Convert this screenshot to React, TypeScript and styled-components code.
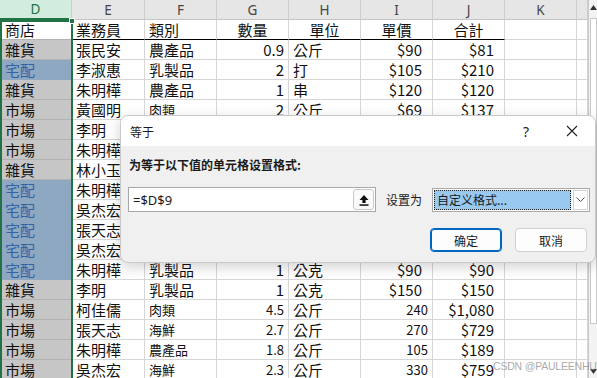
import React from "react";
import styled, { createGlobalStyle, css } from "styled-components";

const GlobalStyle = createGlobalStyle`
  html, body {
    margin: 0;
    padding: 0;
    background: #ffffff;
  }
`;

const COLS = [72, 73, 72, 72, 72, 72, 72, 72, 11];
const GRID = COLS.map((c) => `${c}px`).join(" ");
const LETTERS = ["D", "E", "F", "G", "H", "I", "J", "K", ""];

type Tone = "active" | "grey" | "blue";
type Row = {
  shop: string;
  tone: Tone;
  rep: string;
  cat: string;
  qty: string;
  unit: string;
  price: string;
  total: string;
  smallCat?: boolean;
  smallNum?: boolean;
};

const rows: Row[] = [
  { shop: "雜貨", tone: "grey", rep: "張民安", cat: "農產品", qty: "0.9", unit: "公斤", price: "$90", total: "$81" },
  { shop: "宅配", tone: "blue", rep: "李淑惠", cat: "乳製品", qty: "2", unit: "打", price: "$105", total: "$210" },
  { shop: "雜貨", tone: "grey", rep: "朱明樺", cat: "農產品", qty: "1", unit: "串", price: "$120", total: "$120" },
  { shop: "市場", tone: "grey", rep: "黃國明", cat: "肉類", qty: "2", unit: "公斤", price: "$69", total: "$137", smallCat: true },
  { shop: "市場", tone: "grey", rep: "李明", cat: "海鮮", qty: "1.5", unit: "公斤", price: "$300", total: "$450" },
  { shop: "市場", tone: "grey", rep: "朱明樺", cat: "肉類", qty: "3", unit: "公斤", price: "$69", total: "$206" },
  { shop: "雜貨", tone: "grey", rep: "林小玉", cat: "農產品", qty: "2", unit: "串", price: "$120", total: "$240" },
  { shop: "宅配", tone: "blue", rep: "朱明樺", cat: "乳製品", qty: "1", unit: "打", price: "$105", total: "$105" },
  { shop: "宅配", tone: "blue", rep: "吳杰宏", cat: "乳製品", qty: "2", unit: "公克", price: "$90", total: "$180" },
  { shop: "宅配", tone: "blue", rep: "張天志", cat: "農產品", qty: "1", unit: "串", price: "$120", total: "$120" },
  { shop: "宅配", tone: "blue", rep: "吳杰宏", cat: "乳製品", qty: "3", unit: "打", price: "$105", total: "$315" },
  { shop: "宅配", tone: "blue", rep: "朱明樺", cat: "乳製品", qty: "1", unit: "公克", price: "$90", total: "$90" },
  { shop: "雜貨", tone: "grey", rep: "李明", cat: "乳製品", qty: "1", unit: "公克", price: "$150", total: "$150" },
  { shop: "市場", tone: "grey", rep: "柯佳儒", cat: "肉類", qty: "4.5", unit: "公斤", price: "240", total: "$1,080", smallCat: true, smallNum: true },
  { shop: "市場", tone: "grey", rep: "張天志", cat: "海鮮", qty: "2.7", unit: "公斤", price: "270", total: "$729", smallCat: true, smallNum: true },
  { shop: "市場", tone: "grey", rep: "朱明樺", cat: "農產品", qty: "1.8", unit: "公斤", price: "105", total: "$189", smallCat: true, smallNum: true },
  { shop: "市場", tone: "grey", rep: "吳杰宏", cat: "海鮮", qty: "2.3", unit: "公斤", price: "330", total: "$759", smallCat: true, smallNum: true },
];

const Page = styled.div`
  position: relative;
  width: 597px;
  height: 378px;
  overflow: hidden;
  display: flex;
  background: #ffffff;
  font-family: "Noto Sans CJK TC", "Noto Sans", sans-serif;
`;

const Sheet = styled.div`
  width: 588px;
  display: flex;
  flex-direction: column;
`;

const ColHeaderRow = styled.div`
  display: grid;
  grid-template-columns: ${GRID};
  height: 20px;
  background: #e6e6e6;
`;

const ColLetter = styled.div<{ $active?: boolean }>`
  display: flex;
  align-items: center;
  justify-content: center;
  box-sizing: border-box;
  border-right: 1px solid #cdcdcd;
  border-bottom: 1px solid #c4c4c4;
  font-family: "Noto Sans", "Liberation Sans", sans-serif;
  font-size: 13.5px;
  color: #444444;
  ${(p) =>
    p.$active &&
    css`
      background: #d2ecdd;
      color: #217346;
      border-bottom: 2px solid #217346;
    `}
`;

const DataRow = styled.div`
  display: grid;
  grid-template-columns: ${GRID};
  height: 20px;
`;

const Cell = styled.div<{
  $align?: "left" | "right" | "center";
  $small?: boolean;
  $money?: boolean;
  $head?: boolean;
}>`
  box-sizing: border-box;
  height: 20px;
  border-right: 1px solid #d6d6d6;
  border-bottom: 1px solid #d6d6d6;
  padding: 0 ${(p) => (p.$money ? "10px" : "4px")} 0 4px;
  font-size: ${(p) => (p.$small ? "13px" : "15px")};
  line-height: 19px;
  color: #111111;
  white-space: nowrap;
  overflow: hidden;
  text-align: ${(p) => p.$align ?? "left"};
  ${(p) =>
    p.$head &&
    css`
      border-bottom: 1px solid #000000;
    `}
`;

const ShopCell = styled(Cell)<{ $tone: Tone }>`
  padding-left: 5px;
  border-right: none;
  ${(p) =>
    p.$tone === "grey" &&
    css`
      background: #c6c6c6;
      border-bottom-color: #b3b3b3;
    `}
  ${(p) =>
    p.$tone === "blue" &&
    css`
      background: #8ea8c1;
      color: #2f63a6;
      border-bottom-color: #8ea8c1;
    `}
  ${(p) =>
    p.$tone === "active" &&
    css`
      background: #ffffff;
      border-bottom-color: #b3b3b3;
    `}
`;

const SelectionFrame = styled.div`
  position: absolute;
  left: 0;
  top: 20px;
  width: 73px;
  height: 360px;
  box-sizing: border-box;
  border: 2px solid #217346;
  border-bottom: none;
  pointer-events: none;
`;

const Handle = styled.div`
  position: absolute;
  left: 69px;
  top: 18px;
  width: 4px;
  height: 4px;
  background: #217346;
  border: 1px solid #ffffff;
`;

const ScrollTrack = styled.div`
  width: 9px;
  box-sizing: border-box;
  border-left: 1px solid #c9c9c9;
  background: #f3f3f3;
  display: flex;
  flex-direction: column;
  align-items: center;
`;

const ScrollArrow = styled.div`
  height: 14px;
  display: flex;
  align-items: center;
  justify-content: center;
`;

const ScrollThumb = styled.div`
  width: 7px;
  flex: 1;
  margin: 4px 0 40px;
  box-sizing: border-box;
  border: 1px solid #c9c9c9;
  background: #ffffff;
`;

const Dialog = styled.div`
  position: absolute;
  left: 120px;
  top: 115px;
  width: 476px;
  height: 148px;
  box-sizing: border-box;
  border: 1px solid #c9c9c9;
  border-radius: 8px;
  overflow: hidden;
  background: #f0f0f0;
  box-shadow: 0 4px 14px rgba(0, 0, 0, 0.18);
  display: flex;
  flex-direction: column;
  font-family: "Noto Sans CJK SC", "Noto Sans", sans-serif;
  color: #1a1a1a;
`;

const TitleBar = styled.div`
  height: 30px;
  flex: none;
  background: #ffffff;
  display: flex;
  align-items: center;
  padding: 0 0 0 9px;
  font-size: 12px;
`;

const TitleText = styled.div`
  flex: 1;
`;

const TitleButton = styled.div`
  width: 46px;
  height: 30px;
  display: flex;
  align-items: center;
  justify-content: center;
  font-size: 14px;
  font-family: "Noto Sans", sans-serif;
`;

const Body = styled.div`
  flex: 1;
  display: flex;
  flex-direction: column;
  padding: 11px 7px 0 7px;
`;

const Prompt = styled.div`
  font-size: 12px;
  font-weight: 700;
  line-height: 16px;
  padding-left: 1px;
`;

const FieldRow = styled.div`
  display: flex;
  align-items: center;
  margin-top: 14px;
  height: 25px;
`;

const Input = styled.div`
  flex: none;
  width: 248px;
  height: 25px;
  box-sizing: border-box;
  border: 1px solid #a8a8a8;
  background: #ffffff;
  display: flex;
  align-items: center;
  padding: 0 1px 0 4px;
  font-family: "Noto Sans", "Liberation Sans", sans-serif;
  font-size: 13px;
`;

const InputText = styled.div`
  flex: 1;
`;

const RefButton = styled.div`
  width: 21px;
  height: 21px;
  box-sizing: border-box;
  border: 1px solid #c8c8c8;
  border-radius: 3px;
  background: #fafafa;
  display: flex;
  align-items: center;
  justify-content: center;
`;

const FieldLabel = styled.div`
  flex: none;
  white-space: nowrap;
  font-size: 12px;
  margin: 0 10px 0 10px;
`;

const Select = styled.div`
  flex: none;
  width: 158px;
  height: 24px;
  box-sizing: border-box;
  border: 1px solid #a8a8a8;
  background: #ffffff;
  display: flex;
  align-items: stretch;
  padding: 1px;
`;

const SelectValue = styled.div`
  flex: 1;
  background: #99c9ef;
  outline: 1px dotted #222222;
  outline-offset: -1px;
  font-size: 12px;
  line-height: 20px;
  padding-left: 3px;
  white-space: nowrap;
`;

const SelectArrow = styled.div`
  width: 15px;
  margin-left: 2px;
  box-sizing: border-box;
  border: 1px solid #d4d4d4;
  display: flex;
  align-items: center;
  justify-content: center;
`;

const ButtonRow = styled.div`
  display: flex;
  justify-content: flex-end;
  gap: 13px;
  margin-top: 16px;
  padding-right: 1px;
`;

const Button = styled.div<{ $primary?: boolean }>`
  width: 72px;
  height: 24px;
  box-sizing: border-box;
  border-radius: 4px;
  background: #fdfdfd;
  border: 1px solid ${(p) => (p.$primary ? "#0067c0" : "#d0d0d0")};
  ${(p) =>
    p.$primary &&
    css`
      box-shadow: inset 0 0 0 1px #0067c0;
    `}
  display: flex;
  align-items: center;
  justify-content: center;
  font-size: 12px;
`;

const Watermark = styled.div`
  position: absolute;
  left: 493px;
  top: 360px;
  font-family: "Liberation Sans", sans-serif;
  font-size: 10.5px;
  letter-spacing: -0.2px;
  color: rgba(140, 140, 140, 0.75);
  white-space: nowrap;
`;

export default function App() {
  return (
    <>
      <GlobalStyle />
      <Page>
        <Sheet>
          <ColHeaderRow>
            {LETTERS.map((l, i) => (
              <ColLetter key={i} $active={l === "D"}>
                {l}
              </ColLetter>
            ))}
          </ColHeaderRow>
          <DataRow>
            <ShopCell $tone="active">商店</ShopCell>
            <Cell $head>業務員</Cell>
            <Cell $head>類別</Cell>
            <Cell $head $align="center">數量</Cell>
            <Cell $head $align="center">單位</Cell>
            <Cell $head $align="center">單價</Cell>
            <Cell $head $align="center">合計</Cell>
            <Cell />
            <Cell />
          </DataRow>
          {rows.map((r, i) => (
            <DataRow key={i}>
              <ShopCell $tone={r.tone}>{r.shop}</ShopCell>
              <Cell>{r.rep}</Cell>
              <Cell $small={r.smallCat}>{r.cat}</Cell>
              <Cell $align="right" $small={r.smallNum}>{r.qty}</Cell>
              <Cell>{r.unit}</Cell>
              <Cell $align="right" $small={r.smallNum} $money={r.price.startsWith("$")}>
                {r.price}
              </Cell>
              <Cell $align="right" $money>
                {r.total}
              </Cell>
              <Cell />
              <Cell />
            </DataRow>
          ))}
        </Sheet>
        <ScrollTrack>
          <ScrollArrow>
            <svg width="7" height="5" viewBox="0 0 7 5">
              <path d="M0 5 L3.5 0 L7 5 Z" fill="#333" />
            </svg>
          </ScrollArrow>
          <ScrollThumb />
          <ScrollArrow>
            <svg width="7" height="5" viewBox="0 0 7 5">
              <path d="M0 0 L3.5 5 L7 0 Z" fill="#333" />
            </svg>
          </ScrollArrow>
        </ScrollTrack>

        <SelectionFrame />
        <Handle />

        <Dialog>
          <TitleBar>
            <TitleText>等于</TitleText>
            <TitleButton>?</TitleButton>
            <TitleButton>
              <svg width="12" height="12" viewBox="0 0 12 12">
                <path d="M1 1 L11 11 M11 1 L1 11" stroke="#222" strokeWidth="1.1" />
              </svg>
            </TitleButton>
          </TitleBar>
          <Body>
            <Prompt>为等于以下值的单元格设置格式:</Prompt>
            <FieldRow>
              <Input>
                <InputText>=$D$9</InputText>
                <RefButton>
                  <svg width="10" height="12" viewBox="0 0 10 12">
                    <path d="M5 1 L9.5 6 L6.6 6 L6.6 9 L3.4 9 L3.4 6 L0.5 6 Z" fill="#111" />
                    <rect x="0.5" y="10.3" width="9" height="1.5" fill="#111" />
                  </svg>
                </RefButton>
              </Input>
              <FieldLabel>设置为</FieldLabel>
              <Select>
                <SelectValue>自定义格式...</SelectValue>
                <SelectArrow>
                  <svg width="9" height="5" viewBox="0 0 9 5">
                    <path d="M0.5 0.5 L4.5 4.5 L8.5 0.5" stroke="#555" strokeWidth="1" fill="none" />
                  </svg>
                </SelectArrow>
              </Select>
            </FieldRow>
            <ButtonRow>
              <Button $primary>确定</Button>
              <Button>取消</Button>
            </ButtonRow>
          </Body>
        </Dialog>

        <Watermark>CSDN @PAULEENHUI</Watermark>
      </Page>
    </>
  );
}
